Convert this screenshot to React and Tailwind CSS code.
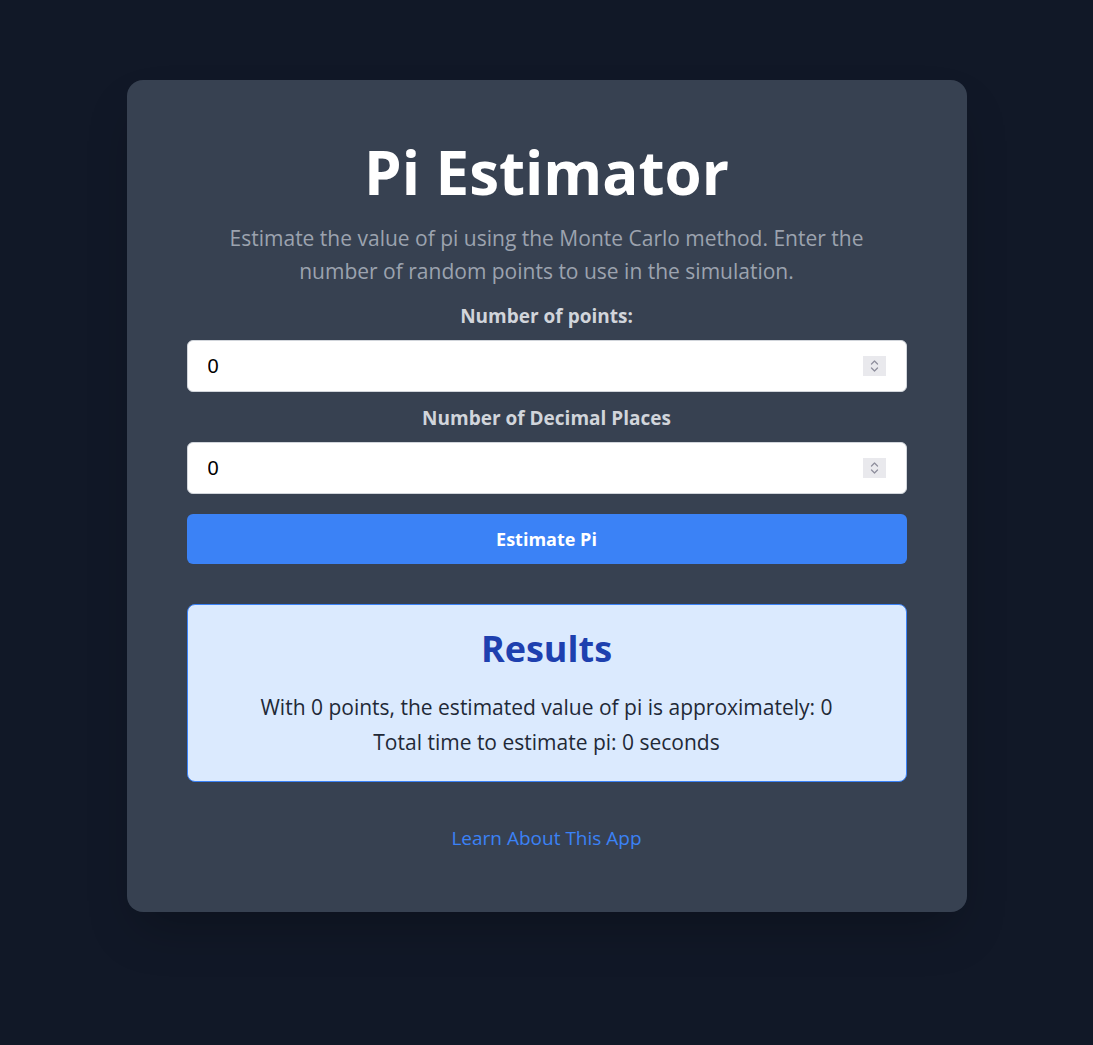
import { useState } from 'react';

/* ─── Setas do campo numérico ───────────────────────────────────────── */
function Spinner() {
  return (
    <div className="pointer-events-none absolute right-[21px] top-1/2 flex h-[20px] w-[23px] -translate-y-1/2 flex-col items-center justify-center bg-[#e9e9ed]">
      <svg width="9" height="16" viewBox="0 0 9 16" fill="none" stroke="#8f8f9d" strokeWidth="1.3" strokeLinecap="round" strokeLinejoin="round">
        <path d="M1.5 6 L4.5 3 L7.5 6" />
        <path d="M1.5 10 L4.5 13 L7.5 10" />
      </svg>
    </div>
  );
}

function Campo({ label, id, value, onChange }) {
  return (
    <div className="flex flex-col">
      <label htmlFor={id} className="mb-[10px] text-center text-[19px] font-bold leading-[28px] text-[#d1d5db]">
        {label}
      </label>
      <div className="relative">
        <input
          id={id}
          type="text"
          inputMode="numeric"
          value={value}
          onChange={onChange}
          className="h-[52px] w-full rounded-md border border-[#d1d5db] bg-white px-5 font-['Liberation_Sans',_Arial,_sans-serif] text-xl text-black outline-none"
        />
        <Spinner />
      </div>
    </div>
  );
}

export default function App() {
  const [pontos, setPontos] = useState('0');
  const [casas, setCasas] = useState('0');

  return (
    <div className="min-h-screen bg-[#111827] py-20 font-['Open_Sans',_sans-serif]">
      <div className="mx-auto flex w-[840px] flex-col rounded-2xl bg-[#374151] p-[60px] shadow-2xl">
        <h1 className="text-center text-[60px] font-bold leading-[64px] text-white">Pi Estimator</h1>
        <p className="mx-auto mt-[18px] max-w-[680px] text-center text-[21px] leading-[33px] text-[#9ca3af]">
          Estimate the value of pi using the Monte Carlo method. Enter the number of random points to use in the simulation.
        </p>

        <div className="mt-[14px] flex flex-col gap-3">
          <Campo label="Number of points:" id="pontos" value={pontos} onChange={e => setPontos(e.target.value)} />
          <Campo label="Number of Decimal Places" id="casas" value={casas} onChange={e => setCasas(e.target.value)} />
        </div>

        <button
          type="button"
          className="mt-5 h-[50px] w-full rounded-md bg-[#3b82f6] text-lg font-bold text-white"
        >
          Estimate Pi
        </button>

        <div className="mt-10 rounded-lg border border-[#3b82f6] bg-[#dbeafe] px-6 pt-6 pb-[21px] text-center">
          <h2 className="text-4xl font-bold text-[#1e40af]">Results</h2>
          <p className="mt-[21px] text-[21px] leading-[35px] text-[#1f2937]">
            With 0 points, the estimated value of pi is approximately: 0
          </p>
          <p className="text-[21px] leading-[35px] text-[#1f2937]">Total time to estimate pi: 0 seconds</p>
        </div>

        <a href="#" className="mt-[42px] text-center text-[19px] leading-[28px] text-[#3b82f6]">
          Learn About This App
        </a>
      </div>
    </div>
  );
}
